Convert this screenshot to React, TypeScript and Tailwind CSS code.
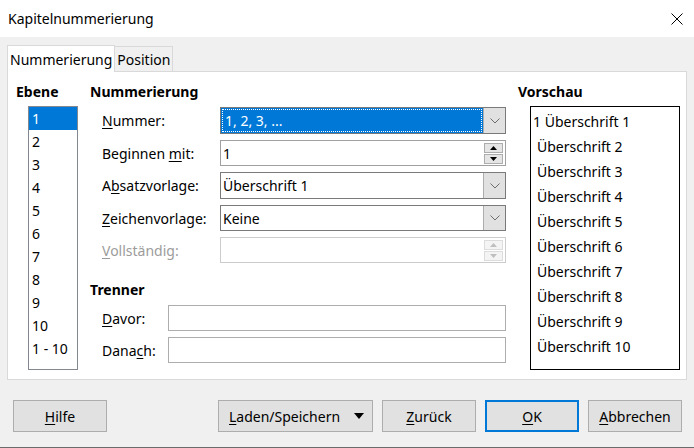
import React from "react";

const font = { fontFamily: '"Noto Sans", "Open Sans", sans-serif' };

const U = ({ children }: { children: React.ReactNode }) => (
  <span className="underline underline-offset-2 decoration-1">{children}</span>
);

const Chevron = ({ color = "#6d6d6d" }: { color?: string }) => (
  <svg width="10" height="6" viewBox="0 0 10 6">
    <path d="M0.5 0.5 L5 5 L9.5 0.5" fill="none" stroke={color} strokeWidth="1" />
  </svg>
);

const Combo = ({ value, focused }: { value: string; focused?: boolean }) => (
  <div className="flex h-full w-[286px] border border-[#7a7a7a] bg-white">
    {focused ? (
      <div className="flex flex-1 items-center bg-[#0078d7] p-px">
        <div className="flex h-full w-full items-center border border-dotted border-white px-[2px] text-white">
          {value}
        </div>
      </div>
    ) : (
      <div className="flex flex-1 items-center px-[2px]">{value}</div>
    )}
    <div className="flex w-[22px] items-center justify-center border-l border-[#adadad] bg-[#e1e1e1]">
      <Chevron />
    </div>
  </div>
);

const Spin = ({ value, disabled }: { value: string; disabled?: boolean }) => {
  const c = disabled ? "#bfbfbf" : "#000";
  const b = disabled ? "border-[#dcdcdc] bg-[#f4f4f4]" : "border-[#adadad] bg-[#e5e5e5]";
  return (
    <div
      className={`flex h-full w-[286px] items-center bg-white pl-[2px] pr-[2px] border ${
        disabled ? "border-[#cccccc]" : "border-[#a0a0a0]"
      }`}
    >
      <div className="flex-1">{value}</div>
      <div className="flex flex-col gap-px">
        <div className={`flex h-[10px] w-[19px] items-center justify-center border ${b}`}>
          <svg width="7" height="4" viewBox="0 0 7 4">
            <path d="M0 4 L3.5 0 L7 4 Z" fill={c} />
          </svg>
        </div>
        <div className={`flex h-[10px] w-[19px] items-center justify-center border ${b}`}>
          <svg width="7" height="4" viewBox="0 0 7 4">
            <path d="M0 0 L3.5 4 L7 0 Z" fill={c} />
          </svg>
        </div>
      </div>
    </div>
  );
};

const Btn = ({
  children,
  w,
  primary,
}: {
  children: React.ReactNode;
  w: string;
  primary?: boolean;
}) => (
  <div
    className={`flex h-[32px] items-center justify-center bg-[#e1e1e1] ${w} ${
      primary ? "border-2 border-[#0078d7]" : "border border-[#adadad]"
    }`}
  >
    {children}
  </div>
);

const levels = ["1", "2", "3", "4", "5", "6", "7", "8", "9", "10", "1 - 10"];

export default function App() {
  return (
    <div
      className="flex h-[448px] w-[694px] flex-col bg-[#f0f0f0] text-[14px] text-black border-b border-[#6b6b6b]"
      style={font}
    >
      {/* Title bar */}
      <div className="flex h-[37px] items-center justify-between bg-white pl-[8px] pr-[11px]">
        <span className="text-[14px]">Kapitelnummerierung</span>
        <svg width="12" height="12" viewBox="0 0 12 12">
          <path d="M0.5 0.5 L11.5 11.5 M11.5 0.5 L0.5 11.5" stroke="#000" strokeWidth="1" />
        </svg>
      </div>

      <div className="px-[7px] pt-[8px]">
        {/* Tabs */}
        <div className="flex h-[26px] items-end">
          <div className="relative z-10 -mb-px flex h-[27px] items-center border border-b-0 border-[#d9d9d9] bg-white px-[2px]">
            Nummerierung
          </div>
          <div className="flex h-[25px] items-center border border-l-0 border-b-0 border-[#d9d9d9] bg-[#f0f0f0] px-[2px]">
            Position
          </div>
        </div>

        {/* Panel */}
        <div className="flex h-[309px] border border-[#d9d9d9] bg-white pt-[9px]">
          {/* Ebene */}
          <div className="w-[82px] pl-[8px]">
            <div className="h-[20px] font-bold">Ebene</div>
            <div className="ml-[12px] mt-[5px] h-[264px] w-[50px] border border-[#828790]">
              {levels.map((l, i) => (
                <div
                  key={l}
                  className={`flex h-[23px] items-center pl-[3px] ${
                    i === 0 ? "bg-[#0078d7] text-white" : ""
                  }`}
                >
                  {l}
                </div>
              ))}
            </div>
          </div>

          {/* Nummerierung */}
          <div className="w-[428px]">
            <div className="h-[20px] font-bold">Nummerierung</div>
            <div className="ml-[12px] flex flex-col">
              <div className="mt-[6px] flex h-[27px] items-center">
                <div className="w-[118px]">
                  <U>N</U>ummer:
                </div>
                <Combo value="1, 2, 3, ..." focused />
              </div>
              <div className="mt-[6px] flex h-[26px] items-center">
                <div className="w-[118px]">
                  Beginnen <U>m</U>it:
                </div>
                <Spin value="1" />
              </div>
              <div className="mt-[6px] flex h-[27px] items-center">
                <div className="w-[118px]">
                  A<U>b</U>satzvorlage:
                </div>
                <Combo value="Überschrift 1" />
              </div>
              <div className="mt-[6px] flex h-[26px] items-center">
                <div className="w-[118px]">
                  <U>Z</U>eichenvorlage:
                </div>
                <Combo value="Keine" />
              </div>
              <div className="mt-[6px] flex h-[26px] items-center text-[#9c9c9c]">
                <div className="w-[118px]">
                  <U>V</U>ollständig:
                </div>
                <Spin value="" disabled />
              </div>
            </div>

            <div className="mt-[16px] h-[20px] font-bold">Trenner</div>
            <div className="ml-[12px] flex flex-col">
              <div className="mt-[6px] flex h-[26px] items-center">
                <div className="w-[66px]">
                  <U>D</U>avor:
                </div>
                <div className="h-full w-[338px] border border-[#adadad] bg-white" />
              </div>
              <div className="mt-[6px] flex h-[26px] items-center">
                <div className="w-[66px]">
                  Dana<U>c</U>h:
                </div>
                <div className="h-full w-[338px] border border-[#adadad] bg-white" />
              </div>
            </div>
          </div>

          {/* Vorschau */}
          <div className="w-[162px]">
            <div className="h-[20px] font-bold">Vorschau</div>
            <div className="ml-[12px] mt-[5px] h-[264px] w-[150px] border border-black pt-[2px]">
              {Array.from({ length: 10 }, (_, i) => (
                <div
                  key={i}
                  className={`flex h-[25px] items-center ${i === 0 ? "pl-[2px]" : "pl-[6px]"}`}
                >
                  {i === 0 ? "1 Überschrift 1" : `Überschrift ${i + 1}`}
                </div>
              ))}
            </div>
          </div>
        </div>
      </div>

      {/* Buttons */}
      <div className="mt-[20px] flex gap-[9px] pl-[13px]">
        <Btn w="w-[94px]">
          <span>
            <U>H</U>ilfe
          </span>
        </Btn>
        <div className="ml-[102px] flex h-[32px] w-[155px] items-center justify-between border border-[#adadad] bg-[#e1e1e1] pl-[10px] pr-[8px]">
          <span>
            <U>L</U>aden/Speichern
          </span>
          <svg width="10" height="6" viewBox="0 0 10 6">
            <path d="M0 0 L10 0 L5 6 Z" fill="#000" />
          </svg>
        </div>
        <Btn w="w-[94px]">
          <span>
            <U>Z</U>urück
          </span>
        </Btn>
        <Btn w="w-[94px]" primary>
          <span>
            <U>O</U>K
          </span>
        </Btn>
        <Btn w="w-[94px]">
          <span>
            <U>A</U>bbrechen
          </span>
        </Btn>
      </div>
    </div>
  );
}
